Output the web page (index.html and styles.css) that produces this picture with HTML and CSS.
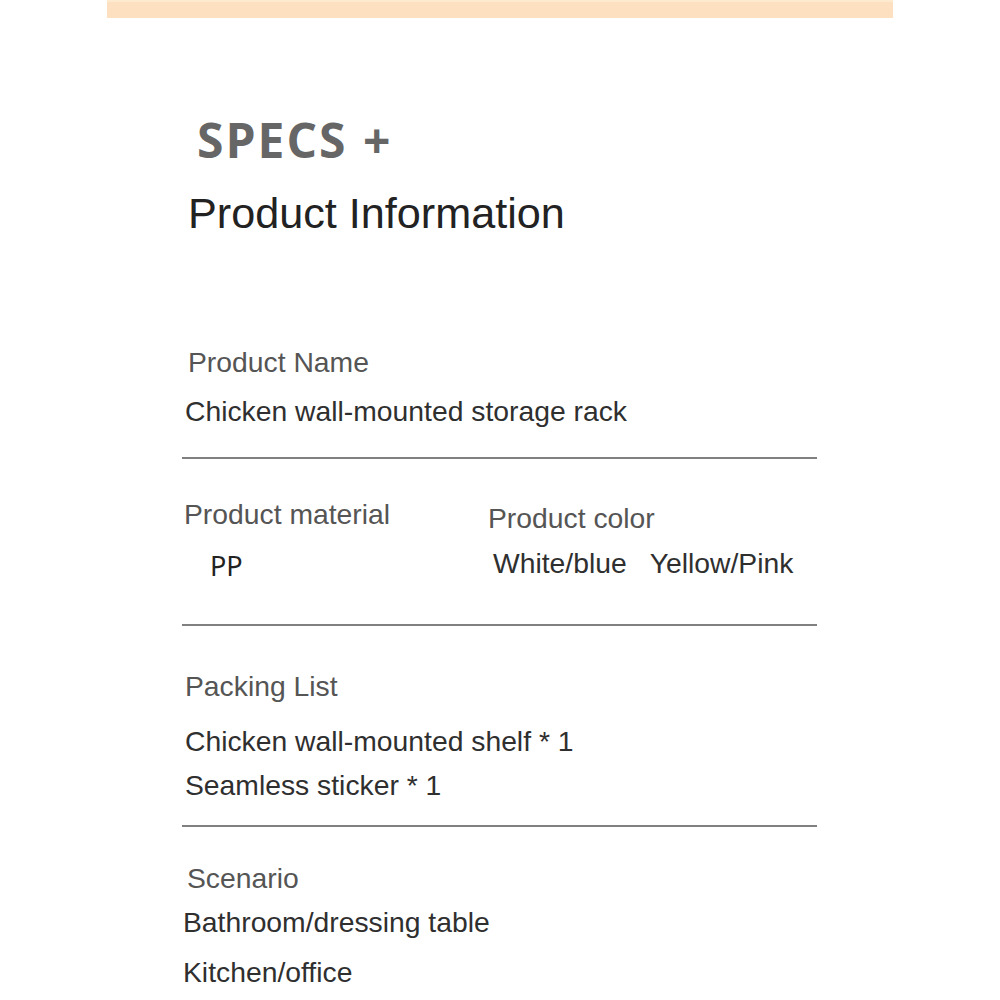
FILE: index.html
```html
<!DOCTYPE html>
<html lang="en">
<head>
<meta charset="utf-8">
<title>Specs</title>
<link rel="stylesheet" href="styles.css">
</head>
<body>
<div class="page">
  <div class="band"></div>
  <div class="specs">
    <div class="kicker">SPECS <span class="plus">+</span></div>
    <h1 class="title">Product Information</h1>

    <section class="block block-name">
      <div class="label label-name">Product Name</div>
      <div class="value value-name">Chicken wall-mounted storage rack</div>
    </section>
    <hr class="rule rule-1">

    <section class="pair">
      <div class="col">
        <div class="label label-mat">Product material</div>
        <div class="value value-pp">PP</div>
      </div>
      <div class="col col-right">
        <div class="label label-color">Product color</div>
        <div class="value value-colors"><span>White/blue</span><span>Yellow/Pink</span></div>
      </div>
    </section>
    <hr class="rule rule-2">

    <section class="block">
      <div class="label label-pack">Packing List</div>
      <div class="value value-pack1">Chicken wall-mounted shelf * 1</div>
      <div class="value value-pack2">Seamless sticker * 1</div>
    </section>
    <hr class="rule rule-3">

    <section class="block">
      <div class="label label-scene">Scenario</div>
      <div class="value value-scene1">Bathroom/dressing table</div>
      <div class="value value-scene2">Kitchen/office</div>
    </section>
  </div>
</div>
</body>
</html>
```

FILE: styles.css
```css
* { box-sizing: border-box; }
html, body { margin: 0; padding: 0; background: #ffffff; }
body { font-family: "Liberation Sans", Arial, sans-serif; }

.page {
  width: 786px;
  margin: 0 auto;
  height: 1000px;
  overflow: hidden;
}

.band {
  height: 18px;
  background: #fde0c0;
  border-top: 2px solid #feeacf;
}

.specs {
  margin-left: 75px;
  width: 635px;
}

.kicker {
  margin-top: 92px;
  padding-left: 15px;
  font-family: "Open Sans", sans-serif;
  font-weight: 700;
  font-size: 48px;
  line-height: 60px;
  height: 60px;
  letter-spacing: 2px;
  color: #666666;
}
.kicker .plus { margin-left: 1px; }

.title {
  margin: 18px 0 0;
  padding-left: 6px;
  font-weight: 400;
  font-size: 43.2px;
  line-height: 50px;
  color: #222222;
}

.label, .value {
  font-size: 28.3px;
  line-height: 32px;
  height: 32px;
  white-space: nowrap;
}
.label { color: #555555; }
.value { color: #2f2f2f; }

.rule {
  margin: 0;
  border: 0;
  height: 2px;
  background: #808080;
}

.label-name { margin-top: 108px; padding-left: 6px; }
.value-name { margin-top: 17px; padding-left: 3px; }
.rule-1 { margin-top: 30px; }

.pair {
  display: grid;
  grid-template-columns: 306px 1fr;
  margin-top: 39px;
}
.label-mat { padding-left: 2px; }
.value-pp {
  margin-top: 20px;
  padding-left: 28px;
  font-family: "Noto Sans", "DejaVu Sans", sans-serif;
  font-size: 27px;
  color: #222222;
}
.label-color { margin-top: 4px; }
.value-colors {
  margin-top: 13px;
  padding-left: 5px;
  display: flex;
  gap: 23px;
}
.rule-2 { margin-top: 42px; }

.label-pack { margin-top: 44px; padding-left: 3px; }
.value-pack1 { margin-top: 23px; padding-left: 3px; }
.value-pack2 { margin-top: 12px; padding-left: 3px; }
.rule-3 { margin-top: 24px; }

.label-scene { margin-top: 35px; padding-left: 5px; }
.value-scene1 { margin-top: 12px; padding-left: 1px; }
.value-scene2 { margin-top: 18px; padding-left: 1px; }
```
